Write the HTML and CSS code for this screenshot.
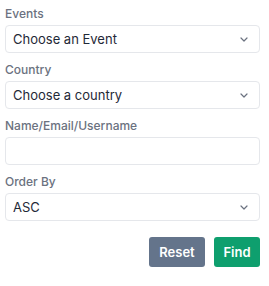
FILE: index.html
```html
<!DOCTYPE html>
<html lang="en">

<head>
    <meta charset="UTF-8">
    <meta name="viewport" content="width=device-width, initial-scale=1.0">
    <title>Search Filters</title>
    <link rel="stylesheet" href="styles.css">
</head>

<body>

    <!-- Filter Form -->
    <form class="filter-form">
        <div class="field">
            <label for="eventSelect">Events</label>
            <div class="select-wrap">
                <select id="eventSelect">
                    <option>Choose an Event</option>
                </select>
                <svg class="caret" viewBox="0 0 8 5" width="8" height="5"><path d="M1 1l3 3 3-3" fill="none" stroke="#6b7280" stroke-width="1.2" stroke-linecap="round" stroke-linejoin="round"/></svg>
            </div>
        </div>

        <div class="field">
            <label for="countrySelect">Country</label>
            <div class="select-wrap">
                <select id="countrySelect">
                    <option>Choose a country</option>
                </select>
                <svg class="caret" viewBox="0 0 8 5" width="8" height="5"><path d="M1 1l3 3 3-3" fill="none" stroke="#6b7280" stroke-width="1.2" stroke-linecap="round" stroke-linejoin="round"/></svg>
            </div>
        </div>

        <div class="field">
            <label for="nameInput">Name/Email/Username</label>
            <input type="text" id="nameInput">
        </div>

        <div class="field">
            <label for="orderSelect">Order By</label>
            <div class="select-wrap">
                <select id="orderSelect">
                    <option>ASC</option>
                    <option>DESC</option>
                </select>
                <svg class="caret" viewBox="0 0 8 5" width="8" height="5"><path d="M1 1l3 3 3-3" fill="none" stroke="#6b7280" stroke-width="1.2" stroke-linecap="round" stroke-linejoin="round"/></svg>
            </div>
        </div>

        <div class="actions">
            <button type="reset" class="btn reset">Reset</button>
            <button type="submit" class="btn find">Find</button>
        </div>
    </form>

</body>

</html>
```

FILE: styles.css
```css
body {
    font-family: Inter, "Noto Sans", sans-serif;
    margin: 0;
    background-color: #ffffff;
}

.filter-form {
    width: 255px;
    padding: 5px 0 0 5px;
}

.field {
    margin-bottom: 8px;
}

.field label {
    display: block;
    font-size: 12px;
    line-height: 18px;
    font-weight: 500;
    color: #6b7280;
    margin-bottom: 2px;
}

.select-wrap {
    position: relative;
}

select,
input[type="text"] {
    display: block;
    box-sizing: border-box;
    width: 100%;
    height: 28px;
    padding: 0 7px;
    font-family: inherit;
    font-size: 13px;
    color: #1f2937;
    background-color: #fff;
    border: 1px solid #e5e7eb;
    border-radius: 4px;
    outline: none;
    appearance: none;
    -webkit-appearance: none;
}

.caret {
    position: absolute;
    right: 12px;
    top: 12px;
    pointer-events: none;
}

.actions {
    display: flex;
    justify-content: flex-end;
    gap: 9px;
    margin-top: 16px;
}

.btn {
    height: 30px;
    border: none;
    border-radius: 3px;
    color: #fff;
    font-family: inherit;
    font-size: 13px;
    font-weight: 600;
    cursor: pointer;
}

.btn.reset {
    width: 56px;
    background-color: #64748b;
}

.btn.find {
    width: 46px;
    background-color: #0e9f6e;
}
```
